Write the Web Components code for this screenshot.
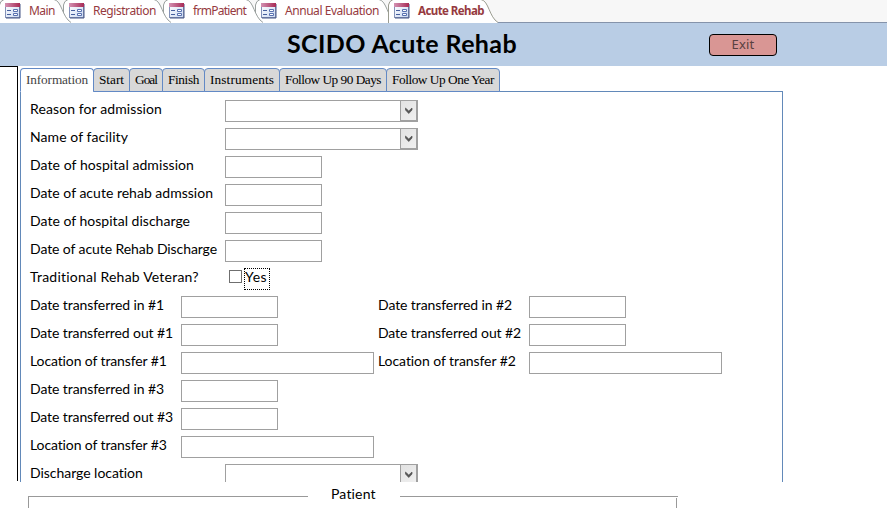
<!DOCTYPE html>
<html lang="en"><head><meta charset="utf-8"><title>SCIDO Acute Rehab</title>
<style>html,body{margin:0;background:#fff}body{width:887px;height:508px;overflow:hidden}</style></head>
<body><rehab-page></rehab-page>
<script>
const define=(name,html,setup)=>{
  const t=document.createElement('template');t.innerHTML=html;
  customElements.define(name,class extends HTMLElement{
    connectedCallback(){
      if(this.shadowRoot)return;
      this.attachShadow({mode:'open'}).append(t.content.cloneNode(true));
      if(setup)setup(this,this.shadowRoot);
    }
  });
};
// Text whose letter spacing is tuned so that it fills the given width.
define('fit-text',`<style>:host{display:inline-block;white-space:nowrap}span{display:inline-block;white-space:pre}</style><span></span>`,(h,r)=>{
  const s=r.querySelector('span');s.textContent=h.getAttribute('text');
  const w=+h.getAttribute('w');h.style.width=w+'px';
  const n=s.getBoundingClientRect().width;
  if(n)s.style.letterSpacing=((w-n)/s.textContent.length)+'px';
});
define('form-icon',`<style>:host{display:block;width:16px;height:16px}svg{display:block}</style>
<svg width="16" height="16"><defs><linearGradient id="a"><stop stop-color="#d392b3"/><stop offset="1" stop-color="#a82b55"/></linearGradient><linearGradient id="b" x2="1" y2="1"><stop stop-color="#fff"/><stop offset="1" stop-color="#cbd9f2"/></linearGradient></defs>
<rect x=".5" y=".5" width="14" height="14" fill="url(#b)" stroke="#8492b8"/><path d="M15 1V15H1" fill="none" stroke="#485887"/><rect width="15" height="4" fill="url(#a)"/>
<path d="M2 7.5H6M2 11.5H6" stroke="#465f9d"/><path d="M8.5 6.5H12.5V8.5H8.5ZM8.5 10.5H12.5V12.5H8.5Z" fill="#fff" stroke="#5871b0"/></svg>`);
define('doc-tab',`<style>:host{display:block;position:relative;height:23px;flex:none;color:#963a40;font:12px/22px "Noto Sans",sans-serif}
svg{position:absolute;left:0;top:0;overflow:visible}.c{position:relative;display:flex;padding:0 0 0 6px;gap:8px}form-icon{margin-top:3px}:host([active]) .c{font:bold 11.5px/22px "Noto Sans",sans-serif}</style>
<svg height="23"><path class="f"/><path class="s"/></svg><div class="c"><form-icon></form-icon><fit-text></fit-text></div>`,(h,r)=>{
  const w=+h.getAttribute('w');h.style.width=w+'px';h.style.zIndex=h.getAttribute('z');
  const d=`M.5 23V5Q1 1 5 -.5H${w-9}C${w-1} 1 ${w-1} 17 ${w+8} 22.5`;
  r.querySelector('svg').setAttribute('width',w);
  const f=r.querySelector('.f'),s=r.querySelector('.s');
  f.setAttribute('d',d+'V23Z');f.setAttribute('fill','#fff');
  s.setAttribute('d',d);s.setAttribute('fill','none');s.setAttribute('stroke',h.hasAttribute('active')?'#9a9c90':'#9aa09e');
  const t=document.createElement('fit-text');t.setAttribute('text',h.getAttribute('text'));t.setAttribute('w',h.getAttribute('tw'));
  r.querySelector('fit-text').replaceWith(t);
});
define('page-tab',`<style>:host{display:flex;justify-content:center;box-sizing:border-box;height:24px;border:1px solid #6289c5;border-radius:4px 4px 0 0;background:#d8d8d8;margin-right:-1px;flex:none;font:13.3px/22px "Liberation Serif",serif;color:#000}
:host([active]){background:#fff;border-bottom-color:#fff;color:#444}</style><slot></slot>`,h=>{h.style.width=h.getAttribute('w')+'px'});
define('text-field',`<style>:host{display:block;box-sizing:border-box;width:97px;height:22px;border:1px solid #a0a0a0;background:#fff;flex:none}:host([wide]){width:193px}</style>`);
define('combo-field',`<style>:host{display:flex;justify-content:flex-end;box-sizing:border-box;width:193px;height:22px;border:1px solid #a0a0a0;flex:none}
.b{box-sizing:border-box;width:17px;height:20px;border:1px solid #a0a0a0;border-width:0 1px 1px;background:linear-gradient(135deg,#e2e2e2,#f0f0f0)}svg{display:block}</style>
<div class="b"><svg width="15" height="19"><path d="M4.5 7V9L7.75 12.5L11 9V7L7.75 10Z" fill="#555" stroke="#555" stroke-width=".7"/></svg></div>`);
define('form-row',`<style>:host{display:flex;height:28px;font:14px/17px Lato,sans-serif;color:#000}.l{width:195px;flex:none}:host([short]) .l{width:151px}</style><div class="l"><slot name="label"></slot></div><slot></slot>`);
define('yes-check',`<style>:host{display:flex;padding-left:4px}.c{box-sizing:border-box;width:13px;height:13px;margin-top:2px;border:1px solid #6f6f6f}.y{box-sizing:border-box;width:26px;height:22px;margin-left:2px;border:1px dotted #000;line-height:15px}</style><div class="c"></div><div class="y"><fit-text text="Yes" w="22"></fit-text></div>`);
define('exit-button',`<style>:host{display:block;box-sizing:border-box;width:68px;height:22px;border:1px solid #000;border-radius:4px;background:#d99694;color:#584041;text-align:center;font:13px/19px "Noto Sans",sans-serif}</style><slot></slot>`);
define('patient-group',`<style>:host{display:flex;height:12px;margin:14px 0 0 28px;width:650px;font:14px/19px Lato,sans-serif}.a{width:279px;border:1px solid #999;border-width:1px 0 0 1px}.m{width:92px;box-sizing:border-box;padding-left:23px;margin-top:-12px}.z{flex:1;border-top:1px solid #999;display:flex;justify-content:flex-end;padding:1px 1px 0 0}.z i{width:1px;background:#999}</style>
<div class="a"></div><div class="m"><fit-text text="Patient" w="45"></fit-text></div><div class="z"><i></i></div>`);
const row=(t,w,c,a='')=>`<form-row ${a}><fit-text slot="label" text="${t}" w="${w}"></fit-text>${c}</form-row>`;
const F='<text-field></text-field>',W='<text-field wide></text-field>',C='<combo-field></combo-field>';
const pair=(a,b)=>`<div class="pair">${a}${b}</div>`;
define('rehab-page',`<style>:host{display:block;width:887px;height:508px;overflow:hidden;background:#fff}
.docs{display:flex;height:22px;background:#f7f7f7;border-bottom:1px solid #8593aa}.docs doc-tab:first-child{margin-left:-1px}
header{display:flex;height:43px;background:#b9cde5;color:#000}
h1{margin:0 0 0 287px;font:bold 25px/41px Lato,sans-serif;width:422px}exit-button{margin-top:11px}
.main{display:grid;grid-template-columns:17px 1px 2px 763px;height:416px;overflow:hidden}
.top{border-top:1px solid #000}.bar{background:#000;height:415px}
.tabs{display:flex;height:23px;padding-top:2px;position:relative;z-index:1}
.panel{box-sizing:border-box;height:400px;border:1px solid #6289b9;padding:8px 0 0 9px}
.pair{display:grid;grid-template-columns:348px 1fr}</style>
<div class="docs">
<doc-tab text="Main" w="64" tw="26" z="6"></doc-tab><doc-tab text="Registration" w="100" tw="63" z="5"></doc-tab><doc-tab text="frmPatient" w="92" tw="53" z="4"></doc-tab><doc-tab text="Annual Evaluation" w="133" tw="94" z="3"></doc-tab><doc-tab active text="Acute Rehab" w="102" tw="66" z="9"></doc-tab></div>
<header><h1><fit-text text="SCIDO Acute Rehab" w="230"></fit-text></h1><exit-button><fit-text text="Exit" w="23"></fit-text></exit-button></header>
<div class="main"><div class="top"></div><div class="bar"></div><div></div><div>
<div class="tabs">${[['Information',74,62],['Start',37,25],['Goal',34,22],['Finish',43,31],['Instruments',76,64],['Follow Up 90 Days',108,96],['Follow Up One Year',114,102]].map(([t,w,x],i)=>`<page-tab w="${w}" ${i?'':'active'}><fit-text text="${t}" w="${x}"></fit-text></page-tab>`).join('')}</div>
<div class="panel">
${row('Reason for admission',132,C)}${row('Name of facility',98,C)}${row('Date of hospital admission',164,F)}${row('Date of acute rehab admssion',183,F)}${row('Date of hospital discharge',160,F)}${row('Date of acute Rehab Discharge',187,F)}${row('Traditional Rehab Veteran?',169,'<yes-check></yes-check>')}
${pair(row('Date transferred in #1',134,F,'short'),row('Date transferred in #2',134,F,'short'))}
${pair(row('Date transferred out #1',143,F,'short'),row('Date transferred out #2',143,F,'short'))}
${pair(row('Location of transfer #1',137,W,'short'),row('Location of transfer #2',138,W,'short'))}
${row('Date transferred in #3',134,F,'short')}${row('Date transferred out #3',143,F,'short')}${row('Location of transfer #3',137,W,'short')}${row('Discharge location',113,C)}
</div></div></div>
<patient-group></patient-group>`);
</script></body></html>
